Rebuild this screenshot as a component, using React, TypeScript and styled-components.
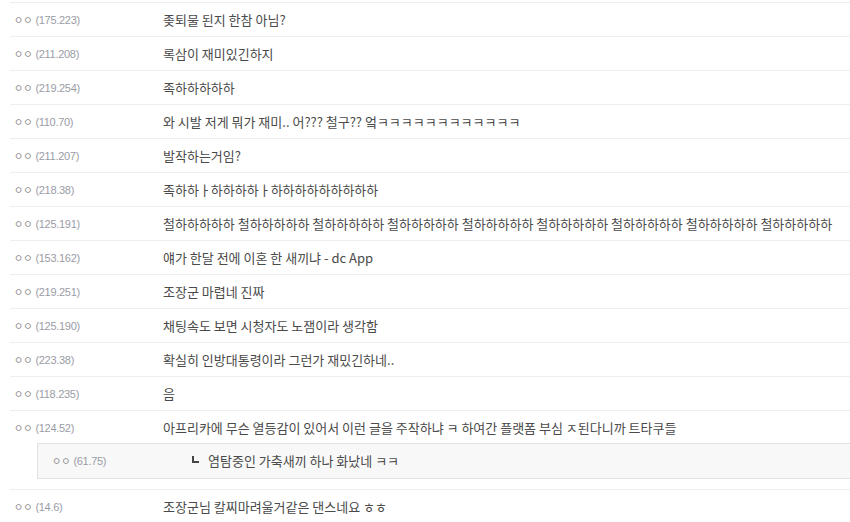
import React from "react";
import styled, { createGlobalStyle } from "styled-components";

const GlobalStyle = createGlobalStyle`
  html, body {
    margin: 0;
    padding: 0;
    background: #fff;
  }
  body {
    font-family: "Noto Sans CJK KR", "Noto Sans", sans-serif;
    overflow: hidden;
  }
`;

const List = styled.ul`
  list-style: none;
  margin: 2px 0 0 0;
  padding: 0 0 0 10px;
`;

const Item = styled.li`
  border-top: 1px solid #eeeeee;
`;

const Row = styled.div`
  display: flex;
  align-items: center;
  height: 33px;
`;

const Writer = styled.div<{ $w: number }>`
  flex: 0 0 ${(p) => p.$w}px;
  display: flex;
  align-items: center;
  padding-left: 4px;
  box-sizing: border-box;
  white-space: nowrap;
`;

const Nick = styled.span`
  font-family: "Noto Sans CJK KR", sans-serif;
  font-size: 10px;
  color: #8a8a8a;
  line-height: 1;
`;

const Ip = styled.span`
  font-family: "Liberation Sans", Arial, sans-serif;
  font-size: 11px;
  letter-spacing: -0.3px;
  color: #9a9ca6;
  margin-left: 3px;
`;

const Text = styled.div`
  font-family: "Noto Sans CJK KR", sans-serif;
  font-size: 13px;
  color: #4a4a4a;
  white-space: nowrap;
  display: flex;
  align-items: center;
  margin-top: -1px;
`;

const ReplyBox = styled.div`
  margin: -1px 0 10px 27px;
  border: 1px solid #e1e1e1;
  border-right: none;
  background: #f8f8f8;
`;

const ReplyRow = styled(Row)`
  height: 34px;
  padding-left: 10px;
`;

const ReplyMark = styled.span`
  display: inline-block;
  width: 5px;
  height: 5px;
  border-left: 2px solid #444;
  border-bottom: 2px solid #444;
  margin: 0 9px 2px 0;
`;

type Reply = { ip: string; text: string };
type Comment = { ip: string; text: string; reply?: Reply };

const comments: Comment[] = [
  { ip: "175.223", text: "좆퇴물 된지 한참 아님?" },
  { ip: "211.208", text: "록삼이 재미있긴하지" },
  { ip: "219.254", text: "족하하하하하" },
  { ip: "110.70", text: "와 시발 저게 뭐가 재미.. 어??? 철구?? 엌ㅋㅋㅋㅋㅋㅋㅋㅋㅋㅋㅋㅋ" },
  { ip: "211.207", text: "발작하는거임?" },
  { ip: "218.38", text: "족하하ㅏ하하하하ㅏ하하하하하하하하하" },
  {
    ip: "125.191",
    text: Array(9).fill("철하하하하하").join(" "),
  },
  { ip: "153.162", text: "얘가 한달 전에 이혼 한 새끼냐 - dc App" },
  { ip: "219.251", text: "조장군 마렵네 진짜" },
  { ip: "125.190", text: "채팅속도 보면 시청자도 노잼이라 생각함" },
  { ip: "223.38", text: "확실히 인방대통령이라 그런가 재밌긴하네.." },
  { ip: "118.235", text: "음" },
  {
    ip: "124.52",
    text: "아프리카에 무슨 열등감이 있어서 이런 글을 주작하냐 ㅋ 하여간 플랫폼 부심 ㅈ된다니까 트타쿠들",
    reply: { ip: "61.75", text: "염탐중인 가축새끼 하나 화났네 ㅋㅋ" },
  },
  { ip: "14.6", text: "조장군님 칼찌마려울거같은 댄스네요 ㅎㅎ" },
];

function Name({ ip }: { ip: string }) {
  return (
    <>
      <Nick>ㅇㅇ</Nick>
      <Ip>({ip})</Ip>
    </>
  );
}

export default function App() {
  return (
    <>
      <GlobalStyle />
      <List>
        {comments.map((c, i) => (
          <Item key={i}>
            <Row>
              <Writer $w={153}>
                <Name ip={c.ip} />
              </Writer>
              <Text>{c.text}</Text>
            </Row>
            {c.reply && (
              <ReplyBox>
                <ReplyRow>
                  <Writer $w={144}>
                    <Name ip={c.reply.ip} />
                  </Writer>
                  <Text>
                    <ReplyMark />
                    {c.reply.text}
                  </Text>
                </ReplyRow>
              </ReplyBox>
            )}
          </Item>
        ))}
      </List>
    </>
  );
}
